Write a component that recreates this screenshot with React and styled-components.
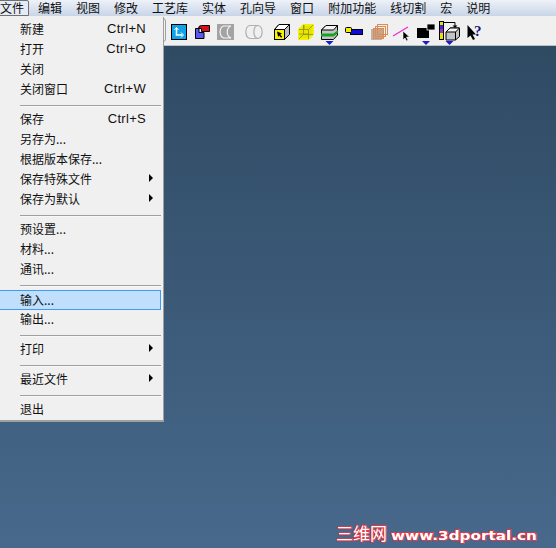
import React from 'react';
import styled, { createGlobalStyle } from 'styled-components';

const GlobalStyle = createGlobalStyle`
	html, body {
		margin: 0;
		padding: 0;
		overflow: hidden;
	}
	body {
		font-family: "Noto Sans CJK SC", "Liberation Sans", sans-serif;
		font-size: 12px;
		color: #101010;
	}
`;

const menus = ['文件', '编辑', '视图', '修改', '工艺库', '实体', '孔向导', '窗口', '附加功能', '线切割', '宏', '说明'];

const fileMenu = [
	[
		{ label: '新建', shortcut: 'Ctrl+N' },
		{ label: '打开', shortcut: 'Ctrl+O' },
		{ label: '关闭' },
		{ label: '关闭窗口', shortcut: 'Ctrl+W' },
	],
	[
		{ label: '保存', shortcut: 'Ctrl+S' },
		{ label: '另存为...' },
		{ label: '根据版本保存...' },
		{ label: '保存特殊文件', sub: true },
		{ label: '保存为默认', sub: true },
	],
	[{ label: '预设置...' }, { label: '材料...' }, { label: '通讯...' }],
	[{ label: '输入...', active: true }, { label: '输出...' }],
	[{ label: '打印', sub: true }],
	[{ label: '最近文件', sub: true }],
	[{ label: '退出' }],
];

// y = 0 in every drawing is the top of the icon row
const toolIcons = [
	{
		w: 16,
		ml: 0,
		body: (
			<>
				<rect x="0.500" y="0.500" width="15" height="15" fill="#0fa4ea" stroke="#000" />
				<path d="M5.500 4v7h6" fill="none" stroke="#fff" strokeWidth="1.500" />
				<path d="M3.500 6l2-2.500L7.500 6M10 8.500l2.500 2.500-2.500 2.500" fill="none" stroke="#fff" />
			</>
		),
	},
	{
		w: 15,
		ml: 8,
		body: (
			<>
				<path d="M.5 4.500h3.500v4h5v6H.5z" fill="#5a5af5" stroke="#000" />
				<path d="M3.500 4.500q0-3 3-3h8v6h-8v-3z" fill="#d80f18" stroke="#000" />
			</>
		),
	},
	{
		w: 17,
		ml: 7,
		body: (
			<>
				<rect x="0" y="0" width="17" height="16" fill="#a3a3a3" />
				<path d="M14 2H6.500C2 4 2 12 6.500 14H14M14 2C9 4 9 12 14 14" fill="none" stroke="#f4f4f4" strokeWidth="1.200" />
			</>
		),
	},
	{
		w: 18,
		ml: 11,
		body: (
			<>
				<path d="M5 1.500h8c5.500 1 5.500 12 0 13H5c-5.500-1-5.500-12 0-13z" fill="none" stroke="#b0b0b0" strokeWidth="1.200" />
				<path d="M13 1.500c-5.500 1-5.500 12 0 13" fill="none" stroke="#b0b0b0" strokeWidth="1.200" />
			</>
		),
	},
	{
		w: 16,
		ml: 11,
		body: (
			<>
				<path d="M.5 5.500L5 .5h10.500v10l-5 5H.5z" fill="#bdbdbd" stroke="#000" />
				<path d="M.5 5.500L5 .5h10.500l-5 5z" fill="#fff" stroke="#000" />
				<rect x=".5" y="5.500" width="10" height="10" fill="#f7f200" stroke="#000" />
				<path d="M3 7.500l5 2-1.800 1 2 2.300-1 1-2-2.300-1 1.600z" fill="#000" />
			</>
		),
	},
	{
		w: 16,
		ml: 8,
		body: (
			<>
				<path d="M1 5.500L5.500 1H15v9.500L10.500 15H1z" fill="#e6e600" stroke="#f0f000" strokeWidth="1.800" />
				<path d="M1 5.500h9.500V15M10.500 5.500L15 1M5.500 1v9.500H15M5.500 10.500L1 15M1 10h9.500M6 1v4" fill="none" stroke="#8f8f18" strokeWidth=".8" />
			</>
		),
	},
	{
		w: 17,
		ml: 7,
		drop: true,
		body: (
			<>
				<path d="M.5 6L5 1.500h11.500V11l-4 4.500H.5z" fill="#c4c4c4" stroke="#000" />
				<path d="M.5 6L5 1.500h11.500L12.500 6z" fill="#f4f4f4" stroke="#000" />
				<path d="M0 9.500h12.500L17 6v3l-4.500 3.500H0z" fill="#12a322" />
			</>
		),
	},
	{
		w: 18,
		ml: 7,
		body: (
			<>
				<rect x="5.500" y="5.500" width="12" height="5" fill="#0c0cdc" stroke="#000" />
				<rect x="0.500" y="3.500" width="6" height="5" rx="1" fill="#f4f000" stroke="#000" />
			</>
		),
	},
	{
		w: 17,
		ml: 8,
		body: (
			<>
				<rect x="0" y="5" width="11" height="11" fill="#b5b5b5" />
				<rect x="2.500" y="4.500" width="10" height="10" fill="#c2a690" stroke="#e08a50" />
				<rect x="4.500" y="2.500" width="10" height="10" fill="none" stroke="#e08a50" />
				<rect x="6.500" y=".5" width="10" height="10" fill="none" stroke="#e08a50" />
			</>
		),
	},
	{
		w: 16,
		ml: 5,
		body: (
			<>
				<path d="M0 12L15 3" stroke="#f028d8" strokeWidth="1.200" fill="none" />
				<path d="M10 7v9l2-2 1.500 3 1.500-1-1.500-3h3z" fill="#000" stroke="#fff" strokeWidth=".6" />
			</>
		),
	},
	{
		w: 18,
		ml: 8,
		drop: true,
		body: (
			<>
				<rect x="0" y="4" width="12" height="10" fill="#000" />
				<rect x="10" y="0" width="8" height="6" fill="#000" stroke="#f0f0f0" strokeWidth=".8" />
			</>
		),
	},
	{
		w: 21,
		ml: 4,
		drop: true,
		body: (
			<>
				<rect x=".5" y="-2.500" width="4" height="18" fill="#e8e000" stroke="#000" />
				<rect x="1" y="1" width="3" height="4" fill="#3030e0" />
				<rect x="1" y="5" width="3" height="4" fill="#a030d0" />
				<path d="M4 -1.500h12V2" fill="none" stroke="#000" />
				<path d="M13.500 1.500h5l-2.500 2.500z" fill="#000" />
				<path d="M7 8l4-4h9.500v8.500l-4 3.500H7z" fill="#c4c4c4" stroke="#000" />
				<path d="M7 8l4-4h9.500l-4 4zM16.500 8v8" fill="#f4f4f4" stroke="#000" />
			</>
		),
	},
	{
		w: 16,
		ml: 7,
		body: (
			<>
				<path d="M.5 1v13l3-2.500 2.500 4.500 2-1-2.500-4.500H9z" fill="#000" />
				<text x="7" y="12" fontFamily="Liberation Serif, serif" fontWeight="700" fontSize="15" fill="#101080">?</text>
			</>
		),
	},
];

export default function App() {
	return (
		<>
			<GlobalStyle />
			<Screen>
				<MenuBar>
					{menus.map((m, i) => (
						<MenuTitle key={m} $open={i === 0}>{m}</MenuTitle>
					))}
				</MenuBar>
				<Toolbar>
					<Grip />
					{toolIcons.map((icon, i) => (
						<ToolIcon key={i} $ml={icon.ml}>
							<svg width={icon.w} height="16" viewBox={`0 0 ${icon.w} 16`} style={{ overflow: 'visible' }}>
								{icon.body}
								{icon.drop && <polygon points={`${icon.w / 2 - 4},17 ${icon.w / 2 + 4},17 ${icon.w / 2},21`} fill="#1a1ad0" />}
							</svg>
						</ToolIcon>
					))}
				</Toolbar>
				<Viewport>
					<Watermark>
						<WatermarkCjk>三维网</WatermarkCjk>
						<WatermarkUrl>www.3dportal.cn</WatermarkUrl>
					</Watermark>
				</Viewport>
				<FileMenu>
					{fileMenu.map((group, g) => (
						<React.Fragment key={g}>
							{g > 0 && <Separator />}
							{group.map((item) => (
								<MenuItem key={item.label} $active={item.active}>
									<span>{item.label}</span>
									{item.shortcut && <Shortcut>{item.shortcut}</Shortcut>}
									{item.sub && <SubArrow />}
								</MenuItem>
							))}
						</React.Fragment>
					))}
				</FileMenu>
			</Screen>
		</>
	);
}

const Screen = styled.div`
	position: relative;
	width: 556px;
	height: 548px;
	display: flex;
	flex-direction: column;
	overflow: hidden;
`;

const MenuBar = styled.div`
	height: 16px;
	display: flex;
	align-items: center;
	gap: 14px;
	background: linear-gradient(#eef1f8, #c8d5e8);
	flex: none;
`;

const MenuTitle = styled.div`
	position: relative;
	line-height: 14px;
	white-space: nowrap;
	z-index: 1;
	${(p) =>
		p.$open &&
		`
		&::before {
			content: '';
			position: absolute;
			inset: -1px -5px -1px -3px;
			border: 1px solid #707070;
			border-radius: 2px 2px 0 0;
			background: #e6ecf6;
			z-index: -1;
		}
	`}
`;

const Toolbar = styled.div`
	height: 21px;
	flex: none;
	display: flex;
	align-items: flex-start;
	padding: 8px 0 0 171px;
	position: relative;
	background: #f0f0f0;
	border-bottom: 1px solid #c0c0c0;
`;

const Grip = styled.div`
	position: absolute;
	left: 160px;
	top: 2px;
	width: 4px;
	height: 22px;
	border: 1px solid #a0a0a0;
	border-radius: 3px;
`;

const ToolIcon = styled.div`
	margin-left: ${(p) => p.$ml}px;
	display: flex;
`;

const Viewport = styled.div`
	flex: 1;
	position: relative;
	background: linear-gradient(#2f4a63, #48698c);
`;

const Watermark = styled.div`
	position: absolute;
	left: 336px;
	bottom: 5px;
	display: flex;
	align-items: baseline;
	white-space: nowrap;
	color: #fff;
	-webkit-text-stroke: 1.4px #f5303c;
`;

const WatermarkCjk = styled.span`
	font-family: "Noto Sans CJK SC", sans-serif;
	font-size: 17px;
	line-height: 17px;
	width: 55px;
	paint-order: stroke fill;
`;

const WatermarkUrl = styled.span`
	font-family: "DejaVu Sans", sans-serif;
	font-weight: 700;
	font-size: 12px;
	line-height: 14px;
	display: inline-block;
	transform: scaleX(1.27);
	transform-origin: left;
	paint-order: stroke fill;
`;

const FileMenu = styled.div`
	position: absolute;
	left: 0;
	top: 17px;
	width: 164px;
	height: 405px;
	box-sizing: border-box;
	background: #f0f0f0;
	border-right: 1px solid #a0a0a0;
	border-bottom: 2px solid #a0a0a0;
	padding-top: 3px;
	z-index: 2;
`;

const MenuItem = styled.div`
	height: 20px;
	box-sizing: border-box;
	display: flex;
	align-items: center;
	justify-content: space-between;
	padding: 0 15px 4px 20px;
	margin-right: 2px;
	${(p) => p.$active && `
		background: #bfdffc;
		border: 1px solid #3b9bf5;
		border-left: 0;
		padding: 0 14px 2px 20px;
	`}
`;

const Shortcut = styled.span`
	font-family: "Liberation Sans", sans-serif;
	font-size: 13px;
	letter-spacing: 0.3px;
`;

const SubArrow = styled.span`
	width: 0;
	height: 0;
	border-left: 4px solid #000;
	border-top: 4px solid transparent;
	border-bottom: 4px solid transparent;
	margin-right: -7px;
`;

const Separator = styled.div`
	height: 1px;
	margin: 5px 2px 3px 20px;
	background: #a0a0a0;
	border-bottom: 1px solid #f8f8f8;
`;
